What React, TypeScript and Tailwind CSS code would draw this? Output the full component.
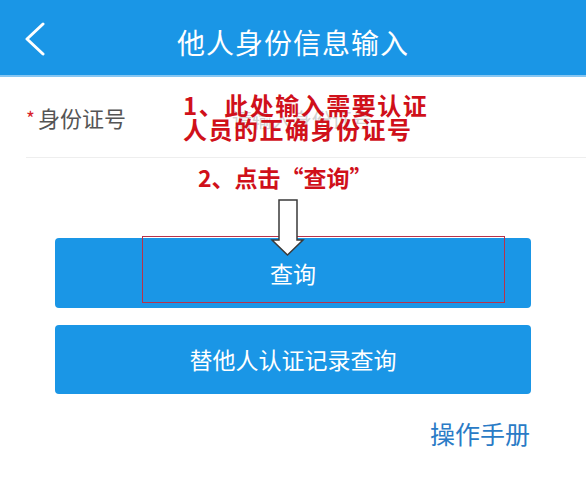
import React from 'react'

const cjk = { fontFamily: '"Noto Sans CJK SC", "Noto Sans", sans-serif' }

function BackChevron() {
  return (
    <svg width="22" height="34" viewBox="0 0 22 34" fill="none">
      <polyline points="19,2 3,17 19,32" stroke="white" strokeWidth="3" strokeLinecap="round" strokeLinejoin="round" />
    </svg>
  )
}

// hollow arrow drawn on top of the screenshot
function DownArrow() {
  return (
    <svg width="36" height="60" viewBox="0 0 36 60">
      <polygon points="9,2 27,2 27,42 33,42 17.5,57 2,42 9,42" fill="white" stroke="#3a3a3a" strokeWidth="1.5" />
    </svg>
  )
}

export default function App() {
  return (
    <div lang="zh-CN" style={cjk} className="relative w-[586px] h-[500px] bg-white overflow-hidden">
      {/* Header */}
      <header className="relative h-[77px] bg-[#1a96e6] border-b-2 border-[#86c6f2] flex items-center justify-center">
        <div className="absolute left-[24px] top-[22px]">
          <BackChevron />
        </div>
        <h1 className="text-white text-[28px] leading-none pt-[8px] tracking-[1px]">他人身份信息输入</h1>
      </header>

      {/* Input row */}
      <div className="ml-[26px] h-[81px] border-b border-[#eeeeee] flex items-center">
        <span className="text-[#d8232a] text-[19px] leading-none self-start mt-[31px] mr-[3px]">*</span>
        <span className="text-[#555555] text-[22px] leading-none w-[194px]">身份证号</span>
        <span className="text-[#d2d2d2] text-[20px] leading-none mt-[6px]">请输入身份证号</span>
      </div>

      {/* Buttons */}
      <div className="mx-[55px] mt-[80px] flex flex-col gap-[17px]">
        <button className="h-[70px] rounded-[4px] bg-[#1a96e6] text-white text-[23px] flex items-center justify-center">
          查询
        </button>
        <button className="h-[69px] rounded-[4px] bg-[#1a96e6] text-white text-[23px] flex items-center justify-center">
          替他人认证记录查询
        </button>
      </div>

      <div className="mt-[27px] pr-[56px] text-right">
        <span className="text-[#2a7bc6] text-[25px] leading-none">操作手册</span>
      </div>

      {/* Annotations */}
      <div className="absolute left-[183px] top-[93px] text-[#d0101a] text-[24px] leading-[24px] font-semibold tracking-[1.5px]">
        <div>1、此处输入需要认证</div>
        <div>人员的正确身份证号</div>
      </div>
      <div className="absolute left-[198px] top-[165px] text-[#d0101a] text-[23px] leading-[24px] font-semibold">
        2、点击“查询”
      </div>
      <div className="absolute left-[142px] top-[236px] w-[363px] h-[67px] border border-[#b8324a]" />
      <div className="absolute left-[270px] top-[198px]">
        <DownArrow />
      </div>
    </div>
  )
}
